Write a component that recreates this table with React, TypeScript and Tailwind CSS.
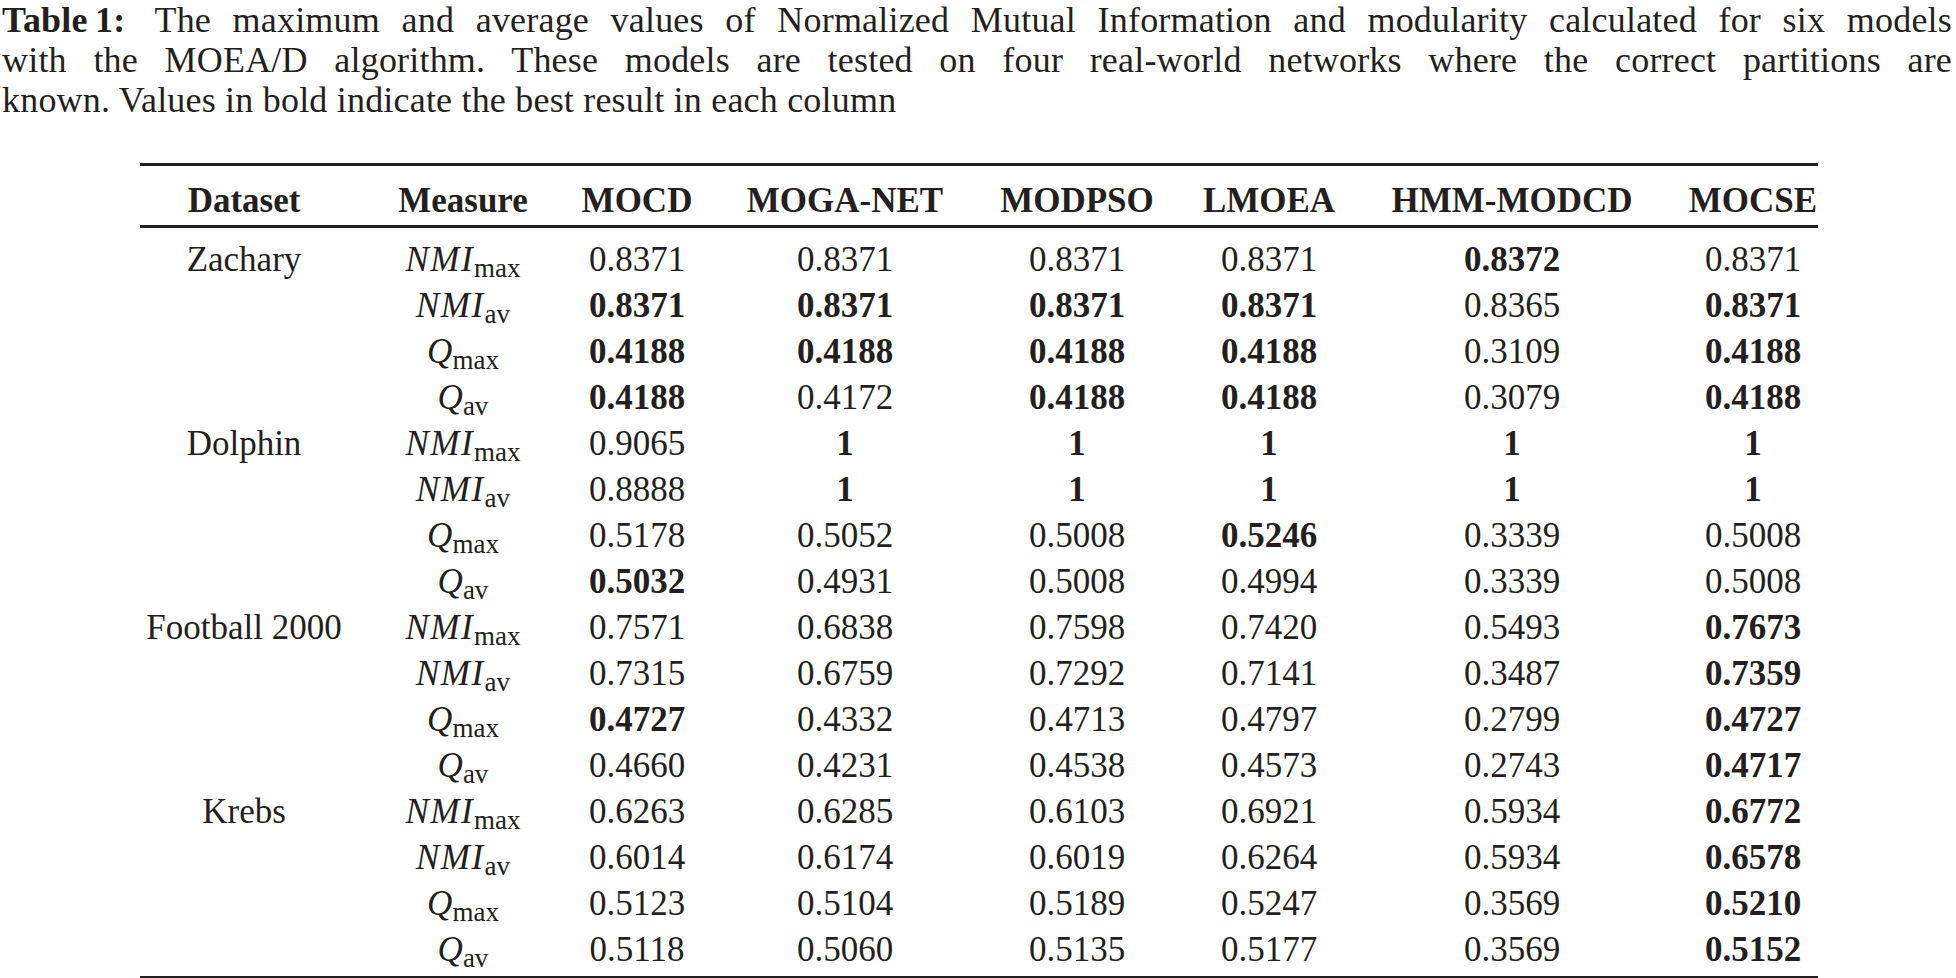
import React from "react";

type Row = { ds?: string; m: "NMImax" | "NMIav" | "Qmax" | "Qav"; v: string[]; b: number[] };

const rows: Row[] = [
  { ds: "Zachary", m: "NMImax", v: ["0.8371", "0.8371", "0.8371", "0.8371", "0.8372", "0.8371"], b: [4] },
  { m: "NMIav", v: ["0.8371", "0.8371", "0.8371", "0.8371", "0.8365", "0.8371"], b: [0, 1, 2, 3, 5] },
  { m: "Qmax", v: ["0.4188", "0.4188", "0.4188", "0.4188", "0.3109", "0.4188"], b: [0, 1, 2, 3, 5] },
  { m: "Qav", v: ["0.4188", "0.4172", "0.4188", "0.4188", "0.3079", "0.4188"], b: [0, 2, 3, 5] },
  { ds: "Dolphin", m: "NMImax", v: ["0.9065", "1", "1", "1", "1", "1"], b: [1, 2, 3, 4, 5] },
  { m: "NMIav", v: ["0.8888", "1", "1", "1", "1", "1"], b: [1, 2, 3, 4, 5] },
  { m: "Qmax", v: ["0.5178", "0.5052", "0.5008", "0.5246", "0.3339", "0.5008"], b: [3] },
  { m: "Qav", v: ["0.5032", "0.4931", "0.5008", "0.4994", "0.3339", "0.5008"], b: [0] },
  { ds: "Football 2000", m: "NMImax", v: ["0.7571", "0.6838", "0.7598", "0.7420", "0.5493", "0.7673"], b: [5] },
  { m: "NMIav", v: ["0.7315", "0.6759", "0.7292", "0.7141", "0.3487", "0.7359"], b: [5] },
  { m: "Qmax", v: ["0.4727", "0.4332", "0.4713", "0.4797", "0.2799", "0.4727"], b: [0, 5] },
  { m: "Qav", v: ["0.4660", "0.4231", "0.4538", "0.4573", "0.2743", "0.4717"], b: [5] },
  { ds: "Krebs", m: "NMImax", v: ["0.6263", "0.6285", "0.6103", "0.6921", "0.5934", "0.6772"], b: [5] },
  { m: "NMIav", v: ["0.6014", "0.6174", "0.6019", "0.6264", "0.5934", "0.6578"], b: [5] },
  { m: "Qmax", v: ["0.5123", "0.5104", "0.5189", "0.5247", "0.3569", "0.5210"], b: [5] },
  { m: "Qav", v: ["0.5118", "0.5060", "0.5135", "0.5177", "0.3569", "0.5152"], b: [5] },
];

const headers = ["Dataset", "Measure", "MOCD", "MOGA-NET", "MODPSO", "LMOEA", "HMM-MODCD", "MOCSE"];

const grid = "grid grid-cols-[208px_230px_118px_298px_166px_218px_268px_172px]";

function Measure({ m }: { m: Row["m"] }) {
  const nmi = m.startsWith("NMI");
  const sub = m.endsWith("max") ? "max" : "av";
  return (
    <span className="whitespace-nowrap">
      <span className={nmi ? "italic tracking-[1.5px]" : "italic"}>{nmi ? "NMI" : "Q"}</span>
      <span className="text-[27px] leading-none align-[-6px]">{sub}</span>
    </span>
  );
}

export default function App() {
  return (
    <div className="w-[1956px] h-[978px] overflow-hidden bg-white text-[#231f20] font-['Liberation_Serif','Times_New_Roman',serif]">
      <div className="ml-[2px] w-[1950px] pt-[2px] flex flex-col gap-[4px] text-[36px] leading-[36px] tracking-[0.2px]">
        <div className="text-justify [text-align-last:justify]">
          <span className="inline-block font-bold mr-[8px]">Table&thinsp;1:</span> The maximum and average values of
          Normalized Mutual Information and modularity calculated for six models
        </div>
        <div className="text-justify [text-align-last:justify]">
          with the MOEA/D algorithm. These models are tested on four real-world networks where the correct partitions
          are
        </div>
        <div>known. Values in bold indicate the best result in each column</div>
      </div>

      <div className="ml-[140px] mt-[45px] w-[1678px] text-[35px]">
        <div className="h-[3px] bg-[#231f20]" />
        <div className={`${grid} h-[59px] pt-[11.5px] leading-[46px] font-bold`}>
          {headers.map((h, i) => (
            <div key={h} className={`text-center whitespace-nowrap ${i === 7 ? "pl-[42px]" : ""}`}>
              {h}
            </div>
          ))}
        </div>
        <div className="h-[3px] bg-[#231f20]" />
        <div className="pt-[8.5px]">
          {rows.map((r, ri) => (
            <div key={ri} className={`${grid} h-[46px] leading-[46px]`}>
              <div className="text-center whitespace-nowrap">{r.ds ?? ""}</div>
              <div className="text-center">
                <Measure m={r.m} />
              </div>
              {r.v.map((val, ci) => (
                <div
                  key={ci}
                  className={`text-center whitespace-nowrap ${r.b.includes(ci) ? "font-bold" : ""} ${
                    ci === 5 ? "pl-[42px]" : ""
                  }`}
                >
                  {val}
                </div>
              ))}
            </div>
          ))}
        </div>
        <div className="mt-[3px] h-[3px] bg-[#231f20]" />
      </div>
    </div>
  );
}
